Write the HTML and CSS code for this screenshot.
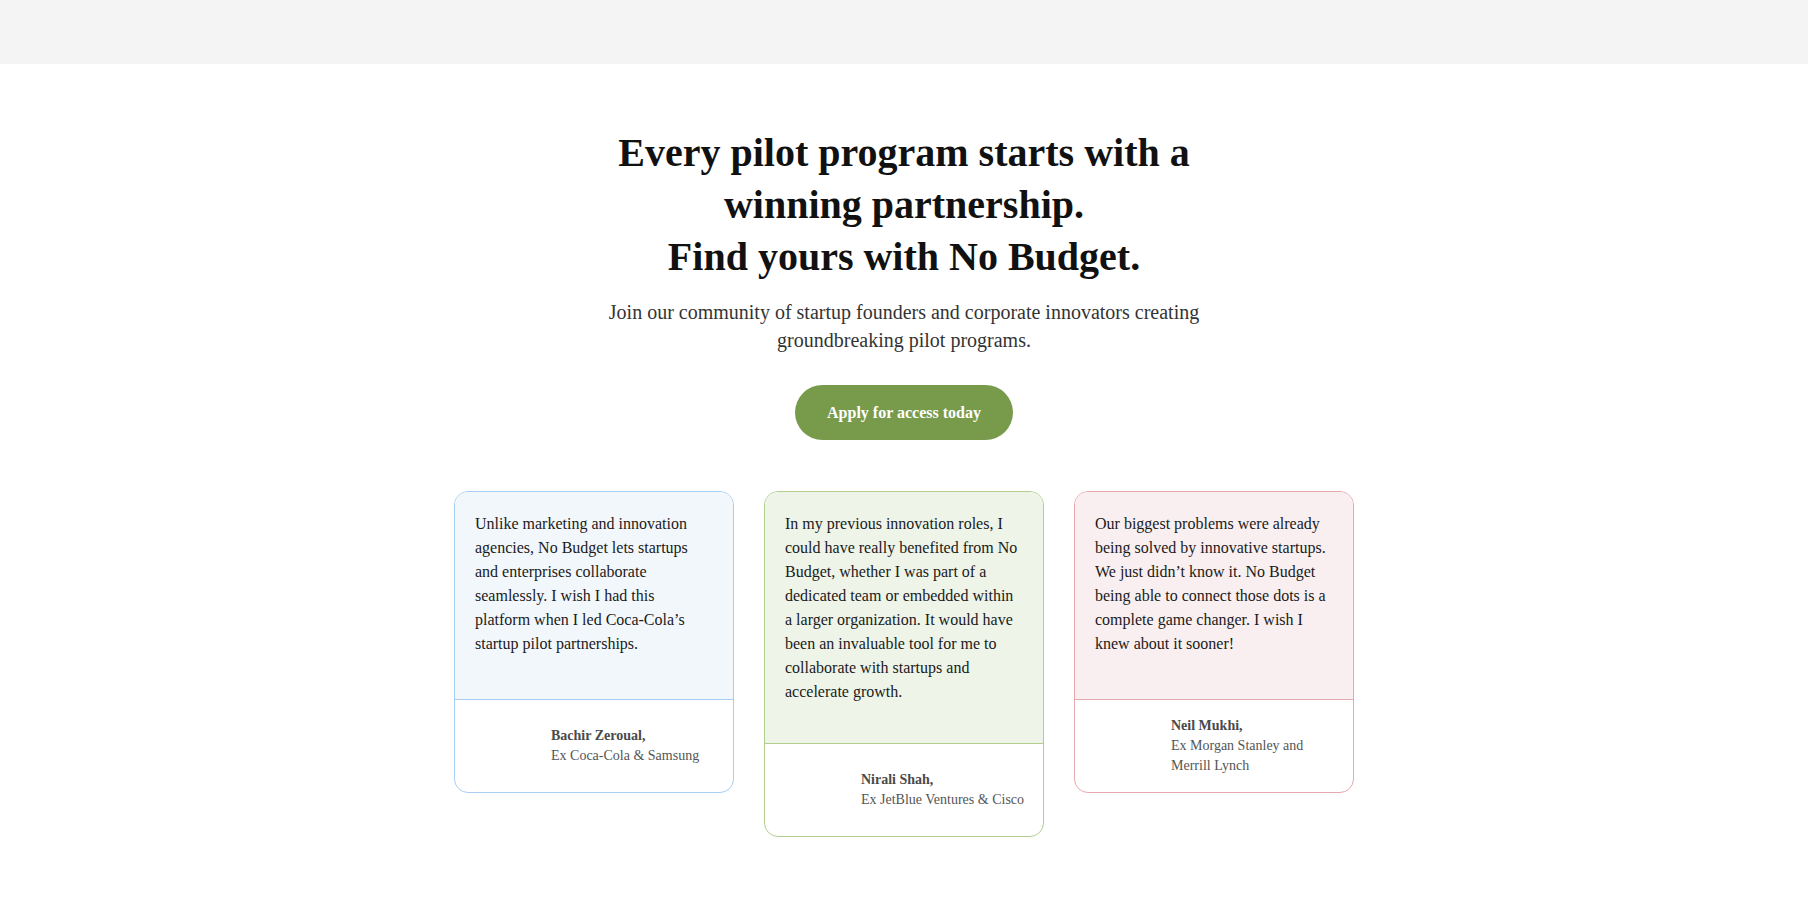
FILE: index.html
```html
<!DOCTYPE html>
<html lang="en">
<head>
<meta charset="utf-8">
<title>No Budget</title>
<link rel="stylesheet" href="styles.css">
</head>
<body>
<header class="topbar"></header>
<main class="hero">
  <h1 class="title">Every pilot program starts with a winning partnership.<br>Find yours with No Budget.</h1>
  <p class="subtitle">Join our community of startup founders and corporate innovators creating groundbreaking pilot programs.</p>
  <a class="cta" href="#">Apply for access today</a>
  <section class="cards">
    <article class="card card-blue">
      <div class="quote">Unlike marketing and innovation agencies, No Budget lets startups and enterprises collaborate seamlessly. I wish I had this platform when I led Coca-Cola’s startup pilot partnerships.</div>
      <div class="author">
        <div class="avatar"></div>
        <div class="who"><strong>Bachir Zeroual,</strong><br>Ex Coca-Cola &amp; Samsung</div>
      </div>
    </article>
    <article class="card card-green">
      <div class="quote">In my previous innovation roles, I could have really benefited from No Budget, whether I was part of a dedicated team or embedded within a larger organization. It would have been an invaluable tool for me to collaborate with startups and accelerate growth.</div>
      <div class="author">
        <div class="avatar"></div>
        <div class="who"><strong>Nirali Shah,</strong><br>Ex JetBlue Ventures &amp; Cisco</div>
      </div>
    </article>
    <article class="card card-red">
      <div class="quote">Our biggest problems were already being solved by innovative startups. We just didn’t know it. No Budget being able to connect those dots is a complete game changer. I wish I knew about it sooner!</div>
      <div class="author">
        <div class="avatar"></div>
        <div class="who"><strong>Neil Mukhi,</strong><br>Ex Morgan Stanley and Merrill Lynch</div>
      </div>
    </article>
  </section>
</main>
</body>
</html>
```
FILE: styles.css
```css
* { box-sizing: border-box; }
html, body { margin: 0; padding: 0; background: #fff; }
body { font-family: "Liberation Serif", "Times New Roman", serif; color: #111; }

.topbar { height: 64px; background: #f4f4f4; }

.hero {
  display: flex;
  flex-direction: column;
  align-items: center;
  padding-top: 63px;
}

.title {
  margin: 0;
  max-width: 620px;
  font-size: 40px;
  line-height: 52px;
  font-weight: 700;
  text-align: center;
  color: #111;
}

.subtitle {
  margin: 15px 0 0;
  max-width: 600px;
  font-size: 20px;
  line-height: 28px;
  text-align: center;
  color: #333;
}

.cta {
  margin-top: 31px;
  display: inline-block;
  padding: 18px 32px;
  border-radius: 28px;
  background: #789b4b;
  color: #fff;
  font-weight: 700;
  font-size: 16px;
  line-height: 19px;
  text-decoration: none;
}

.cards {
  margin-top: 51px;
  display: flex;
  gap: 30px;
  align-items: flex-start;
}

.card {
  width: 280px;
  border: 1px solid;
  border-radius: 14px;
  overflow: hidden;
  background: #fff;
}

.quote {
  min-height: 208px;
  padding: 20px 20px 39px;
  font-size: 16px;
  line-height: 24px;
  color: #1a1a1a;
  border-bottom: 1px solid;
}

.card-blue { border-color: #a7cdf3; }
.card-blue .quote { background: #f2f7fc; border-color: #a7cdf3; }
.card-green { border-color: #b3cf8f; }
.card-green .quote { background: #eef4e8; border-color: #b3cf8f; }
.card-red { border-color: #e6a9b0; }
.card-red .quote { background: #f9eff0; border-color: #e6a9b0; }

.author {
  display: flex;
  align-items: center;
  gap: 16px;
  padding: 16px 12px 16px 20px;
}

.avatar { width: 60px; height: 60px; flex: none; }

.who {
  font-size: 14px;
  line-height: 20px;
  color: #555;
}
.who strong { color: #4a4a4a; }
```
